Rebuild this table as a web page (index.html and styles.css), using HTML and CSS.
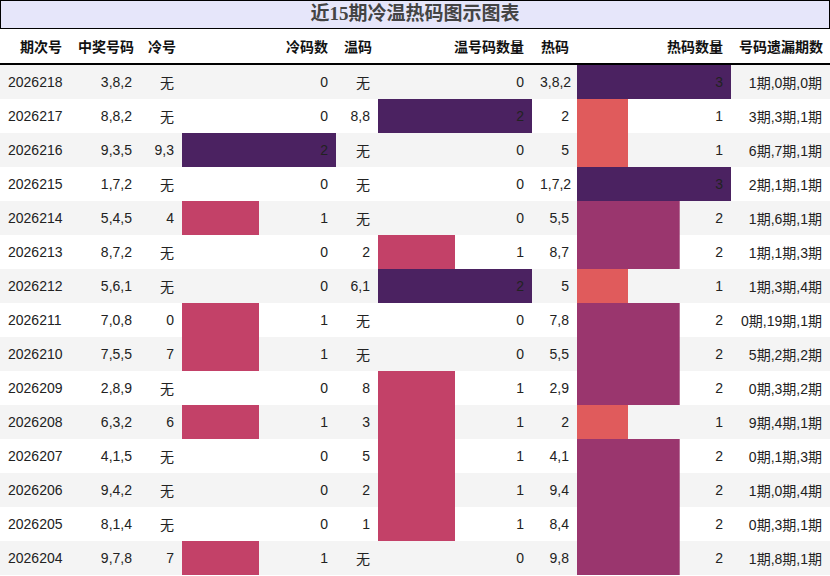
FILE: index.html
```html
<!DOCTYPE html>
<html lang="zh">
<head>
<meta charset="utf-8">
<link rel="stylesheet" href="styles.css">
</head>
<body>
<div class="chart">
  <div class="title">近15期冷温热码图示图表</div>
  <table class="grid">
    <colgroup>
      <col class="c-issue"><col class="c-win"><col class="c-cold"><col class="c-bar">
      <col class="c-warm"><col class="c-bar"><col class="c-hot"><col class="c-bar"><col class="c-miss">
    </colgroup>
    <thead>
      <tr><th>期次号</th><th>中奖号码</th><th>冷号</th><th>冷码数</th><th>温码</th><th>温号码数量</th><th>热码</th><th>热码数量</th><th>号码遗漏期数</th></tr>
    </thead>
    <tbody>
      <tr><td class="l">2026218</td><td>3,8,2</td><td>无</td><td class="bar">0</td><td>无</td><td class="bar">0</td><td>3,8,2</td><td class="bar h3" style="background-size:100% 100%">3</td><td>1期,0期,0期</td></tr>
      <tr><td class="l">2026217</td><td>8,8,2</td><td>无</td><td class="bar">0</td><td>8,8</td><td class="bar b2" style="background-size:100% 100%">2</td><td>2</td><td class="bar h1" style="background-size:33.3% 100%">1</td><td>3期,3期,1期</td></tr>
      <tr><td class="l">2026216</td><td>9,3,5</td><td>9,3</td><td class="bar b2" style="background-size:100% 100%">2</td><td>无</td><td class="bar">0</td><td>5</td><td class="bar h1" style="background-size:33.3% 100%">1</td><td>6期,7期,1期</td></tr>
      <tr><td class="l">2026215</td><td>1,7,2</td><td>无</td><td class="bar">0</td><td>无</td><td class="bar">0</td><td>1,7,2</td><td class="bar h3" style="background-size:100% 100%">3</td><td>2期,1期,1期</td></tr>
      <tr><td class="l">2026214</td><td>5,4,5</td><td>4</td><td class="bar b1" style="background-size:50% 100%">1</td><td>无</td><td class="bar">0</td><td>5,5</td><td class="bar h2" style="background-size:66.7% 100%">2</td><td>1期,6期,1期</td></tr>
      <tr><td class="l">2026213</td><td>8,7,2</td><td>无</td><td class="bar">0</td><td>2</td><td class="bar b1" style="background-size:50% 100%">1</td><td>8,7</td><td class="bar h2" style="background-size:66.7% 100%">2</td><td>1期,1期,3期</td></tr>
      <tr><td class="l">2026212</td><td>5,6,1</td><td>无</td><td class="bar">0</td><td>6,1</td><td class="bar b2" style="background-size:100% 100%">2</td><td>5</td><td class="bar h1" style="background-size:33.3% 100%">1</td><td>1期,3期,4期</td></tr>
      <tr><td class="l">2026211</td><td>7,0,8</td><td>0</td><td class="bar b1" style="background-size:50% 100%">1</td><td>无</td><td class="bar">0</td><td>7,8</td><td class="bar h2" style="background-size:66.7% 100%">2</td><td>0期,19期,1期</td></tr>
      <tr><td class="l">2026210</td><td>7,5,5</td><td>7</td><td class="bar b1" style="background-size:50% 100%">1</td><td>无</td><td class="bar">0</td><td>5,5</td><td class="bar h2" style="background-size:66.7% 100%">2</td><td>5期,2期,2期</td></tr>
      <tr><td class="l">2026209</td><td>2,8,9</td><td>无</td><td class="bar">0</td><td>8</td><td class="bar b1" style="background-size:50% 100%">1</td><td>2,9</td><td class="bar h2" style="background-size:66.7% 100%">2</td><td>0期,3期,2期</td></tr>
      <tr><td class="l">2026208</td><td>6,3,2</td><td>6</td><td class="bar b1" style="background-size:50% 100%">1</td><td>3</td><td class="bar b1" style="background-size:50% 100%">1</td><td>2</td><td class="bar h1" style="background-size:33.3% 100%">1</td><td>9期,4期,1期</td></tr>
      <tr><td class="l">2026207</td><td>4,1,5</td><td>无</td><td class="bar">0</td><td>5</td><td class="bar b1" style="background-size:50% 100%">1</td><td>4,1</td><td class="bar h2" style="background-size:66.7% 100%">2</td><td>0期,1期,3期</td></tr>
      <tr><td class="l">2026206</td><td>9,4,2</td><td>无</td><td class="bar">0</td><td>2</td><td class="bar b1" style="background-size:50% 100%">1</td><td>9,4</td><td class="bar h2" style="background-size:66.7% 100%">2</td><td>1期,0期,4期</td></tr>
      <tr><td class="l">2026205</td><td>8,1,4</td><td>无</td><td class="bar">0</td><td>1</td><td class="bar b1" style="background-size:50% 100%">1</td><td>8,4</td><td class="bar h2" style="background-size:66.7% 100%">2</td><td>0期,3期,1期</td></tr>
      <tr><td class="l">2026204</td><td>9,7,8</td><td>7</td><td class="bar b1" style="background-size:50% 100%">1</td><td>无</td><td class="bar">0</td><td>9,8</td><td class="bar h2" style="background-size:66.7% 100%">2</td><td>1期,8期,1期</td></tr>
    </tbody>
  </table>
</div>
</body>
</html>
```
FILE: styles.css
```css
html, body { margin: 0; padding: 0; background: #fff; }
body { font-family: "Liberation Sans", Arial, "Noto Sans CJK SC", sans-serif; font-size: 14px; color: #222; }
.chart { width: 830px; }
.title {
  box-sizing: border-box;
  height: 29px;
  border: 1px solid #000;
  background: #e6e6fa;
  text-align: center;
  font-family: "Liberation Serif", "Noto Sans CJK SC", serif;
  font-weight: bold;
  font-size: 19px;
  line-height: 26px;
  color: #444;
}
.grid { width: 830px; border-collapse: collapse; table-layout: fixed; }
.c-issue { width: 70px; }
.c-win { width: 70px; }
.c-cold { width: 42px; }
.c-bar { width: 154px; }
.c-warm { width: 42px; }
.c-hot { width: 45px; }
.c-miss { width: 99px; }
th {
  height: 34px;
  padding: 0 8px;
  text-align: right;
  font-weight: bold;
  color: #111;
  border-bottom: 2px solid #000;
  white-space: nowrap;
}
td {
  height: 34px;
  padding: 0 8px;
  text-align: right;
  white-space: nowrap;
  color: #222;
}
td.l { text-align: left; }
tbody tr:nth-child(odd) td { background-color: #f4f4f4; }
tbody tr:nth-child(even) td { background-color: #fff; }
td.bar { background-repeat: no-repeat; background-position: left top; }
td.b2 { background-image: linear-gradient(#4b2261, #4b2261); }
td.b1 { background-image: linear-gradient(#c34168, #c34168); }
td.h3 { background-image: linear-gradient(#4b2261, #4b2261); }
td.h2 { background-image: linear-gradient(#9a366e, #9a366e); }
td.h1 { background-image: linear-gradient(#e05b5c, #e05b5c); }
```
